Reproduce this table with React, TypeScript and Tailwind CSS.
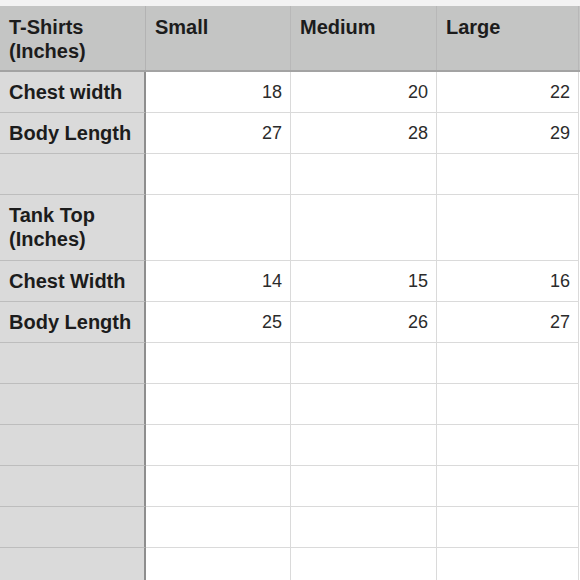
import React from "react";

type Row = {
  label: string[];
  values?: number[];
};

const rows: Row[] = [
  { label: ["Chest width"], values: [18, 20, 22] },
  { label: ["Body Length"], values: [27, 28, 29] },
  { label: [] },
  { label: ["Tank Top", "(Inches)"] },
  { label: ["Chest Width"], values: [14, 15, 16] },
  { label: ["Body Length"], values: [25, 26, 27] },
  { label: [] },
  { label: [] },
  { label: [] },
  { label: [] },
  { label: [] },
  { label: [] },
];

const gridCols = "grid grid-cols-[146px_145px_146px_142px]";

function App() {
  return (
    <div
      className="w-[580px] h-[580px] overflow-hidden bg-white text-[#1c1c1c]"
      style={{ fontFamily: '"Liberation Sans", Arial, sans-serif' }}
    >
      <div className="h-[6px] bg-[#f3f3f3]" />

      {/* header */}
      <div className={`${gridCols} bg-[#c4c5c4] border-b-2 border-[#a3a3a3]`}>
        <div className="h-[64px] px-[9px] pt-[9px] text-[20px] leading-[24px] font-bold border-r border-[#b3b3b3]">
          <div>T-Shirts</div>
          <div>(Inches)</div>
        </div>
        <div className="px-[9px] pt-[9px] text-[20px] leading-[24px] font-bold border-r border-[#b8b8b8]">
          Small
        </div>
        <div className="px-[9px] pt-[9px] text-[20px] leading-[24px] font-bold border-r border-[#b8b8b8]">
          Medium
        </div>
        <div className="px-[9px] pt-[9px] text-[20px] leading-[24px] font-bold border-r border-[#b8b8b8]">
          Large
        </div>
      </div>

      {rows.map((row, i) => (
        <div key={i} className={gridCols}>
          <div
            className={`min-h-[41px] px-[9px] pt-[8px] ${
              row.label.length > 1 ? "pb-[9px]" : "pb-[8px]"
            } bg-[#dadada] text-[20px] leading-[24px] font-bold border-b border-[#bdbdbd] border-r-2 border-r-[#8e8e8e]`}
          >
            {row.label.map((l) => (
              <div key={l}>{l}</div>
            ))}
          </div>
          {[0, 1, 2].map((c) => (
            <div
              key={c}
              className="px-[8px] py-[9px] text-right text-[18px] leading-[22px] text-[#2b2b2b] border-b border-r border-[#dadada]"
            >
              {row.values ? row.values[c] : ""}
            </div>
          ))}
        </div>
      ))}
    </div>
  );
}

export default App;
